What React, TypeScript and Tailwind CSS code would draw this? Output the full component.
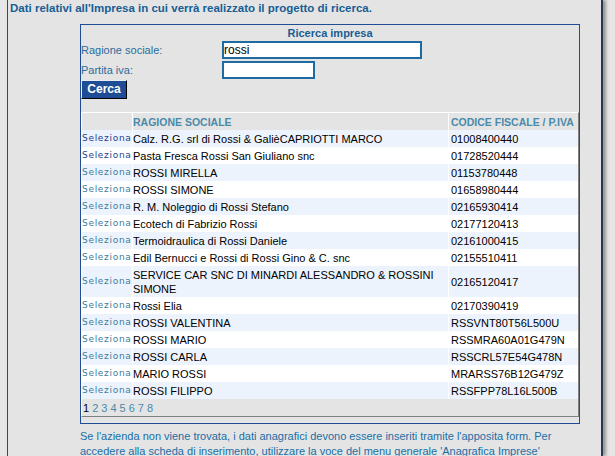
import React from "react";

type Row = { name: React.ReactNode; code: string; tall?: boolean };

const rows: Row[] = [
  { name: "Calz. R.G. srl di Rossi & GalièCAPRIOTTI MARCO", code: "01008400440" },
  { name: "Pasta Fresca Rossi San Giuliano snc", code: "01728520444" },
  { name: "ROSSI MIRELLA", code: "01153780448" },
  { name: "ROSSI SIMONE", code: "01658980444" },
  { name: "R. M. Noleggio di Rossi Stefano", code: "02165930414" },
  { name: "Ecotech di Fabrizio Rossi", code: "02177120413" },
  { name: "Termoidraulica di Rossi Daniele", code: "02161000415" },
  { name: "Edil Bernucci e Rossi di Rossi Gino & C. snc", code: "02155510411" },
  {
    name: (
      <>
        SERVICE CAR SNC DI MINARDI ALESSANDRO &amp; ROSSINI
        <br />
        SIMONE
      </>
    ),
    code: "02165120417",
    tall: true,
  },
  { name: "Rossi Elia", code: "02170390419" },
  { name: "ROSSI VALENTINA", code: "RSSVNT80T56L500U" },
  { name: "ROSSI MARIO", code: "RSSMRA60A01G479N" },
  { name: "ROSSI CARLA", code: "RSSCRL57E54G478N" },
  { name: "MARIO ROSSI", code: "MRARSS76B12G479Z" },
  { name: "ROSSI FILIPPO", code: "RSSFPP78L16L500B" },
];

export default function App() {
  return (
    <div className="w-[615px] h-[456px] overflow-hidden bg-[#e6e6e6] font-['Liberation_Sans',Arial,sans-serif]">
      <div className="ml-[7px] w-[596px] h-[456px] bg-[#e4e4e4] border-l border-l-[#1e4a96] border-r-2 border-r-[#2b3950] shadow-[3px_0_3px_rgba(0,0,0,0.35)]">
        <div className="pl-[2px] pt-px text-[11.5px] font-bold leading-[14px] text-[#175e95] whitespace-nowrap">
          Dati relativi all'Impresa in cui verrà realizzato il progetto di ricerca.
        </div>

        <div className="ml-[72px] mt-[9px] w-[500px] border border-[#1e4d96] pb-[6px]">
          <div className="h-[16px] leading-[16px] text-center text-[11px] font-bold text-[#175e95]">
            Ricerca impresa
          </div>

          <div className="flex items-center h-[18px]">
            <div className="w-[141px] text-[11px] text-[#2a6c9c] leading-[14px]">Ragione sociale:</div>
            <input
              defaultValue="rossi"
              className="w-[200px] h-[18px] bg-white border-2 border-[#1f6aa0] outline-none px-0 text-[12px] leading-[14px] text-black font-['Liberation_Sans',Arial,sans-serif]"
            />
          </div>
          <div className="flex items-center h-[18px] mt-[2px]">
            <div className="w-[141px] text-[11px] text-[#2a6c9c] leading-[14px]">Partita iva:</div>
            <input className="w-[93px] h-[18px] bg-white border-2 border-[#1f6aa0] outline-none px-0 text-[12px]" />
          </div>
          <button className="mt-px block w-[46px] h-[19px] bg-[#1e4d96] border border-t-[#e8ecf4] border-l-[#e8ecf4] border-r-black border-b-black text-white text-[12px] font-bold leading-[15px] font-['Liberation_Sans',Arial,sans-serif]">
            Cerca
          </button>

          <div className="mt-[13px] border border-t-white border-l-white border-r-[#808080] border-b-[#808080]">
            <div className="flex h-[17px] bg-[#e4e4e4] text-[10.5px] font-bold text-[#4a8bab] leading-[14px]">
              <div className="w-[51px] border-r border-white" />
              <div className="w-[316px] border-r border-white flex items-center">RAGIONE SOCIALE</div>
              <div className="flex-1 flex items-center pl-[2px] whitespace-nowrap">CODICE FISCALE / P.IVA</div>
            </div>
            {rows.map((r, i) => (
              <div
                key={i}
                className={`flex ${r.tall ? "h-[31px]" : "h-[17px]"} ${i % 2 === 0 ? "bg-[#edf3fd]" : "bg-white"}`}
              >
                <div
                  className={`w-[51px] border-r border-white flex items-center pt-px font-['DejaVu_Sans',Verdana,sans-serif] text-[9px] tracking-[0.7px] ${
                    i < 2 ? "text-[#1c3f8f]" : "text-[#3a7d9d]"
                  }`}
                >
                  Seleziona
                </div>
                <div className="w-[316px] border-r border-white flex items-center text-[11px] leading-[14px] text-black whitespace-nowrap">
                  <span>{r.name}</span>
                </div>
                <div className="flex-1 flex items-center pl-[2px] text-[11px] leading-[14px] text-black">
                  {r.code}
                </div>
              </div>
            ))}
            <div className="flex items-center h-[17px] bg-[#e4e4e4] text-[11px] leading-[14px] pl-px">
              <span className="text-black">1</span>
              {[2, 3, 4, 5, 6, 7, 8].map((n) => (
                <span key={n} className="text-[#4a8bab] ml-[3px]">
                  {n}
                </span>
              ))}
            </div>
          </div>
        </div>

        <div className="ml-[72px] mt-[5px] text-[11px] leading-[15px] text-[#1b6ea5] whitespace-nowrap">
          Se l'azienda non viene trovata, i dati anagrafici devono essere inseriti tramite l'apposita form. Per
          <br />
          accedere alla scheda di inserimento, utilizzare la voce del menu generale 'Anagrafica Imprese'
        </div>
      </div>
    </div>
  );
}
